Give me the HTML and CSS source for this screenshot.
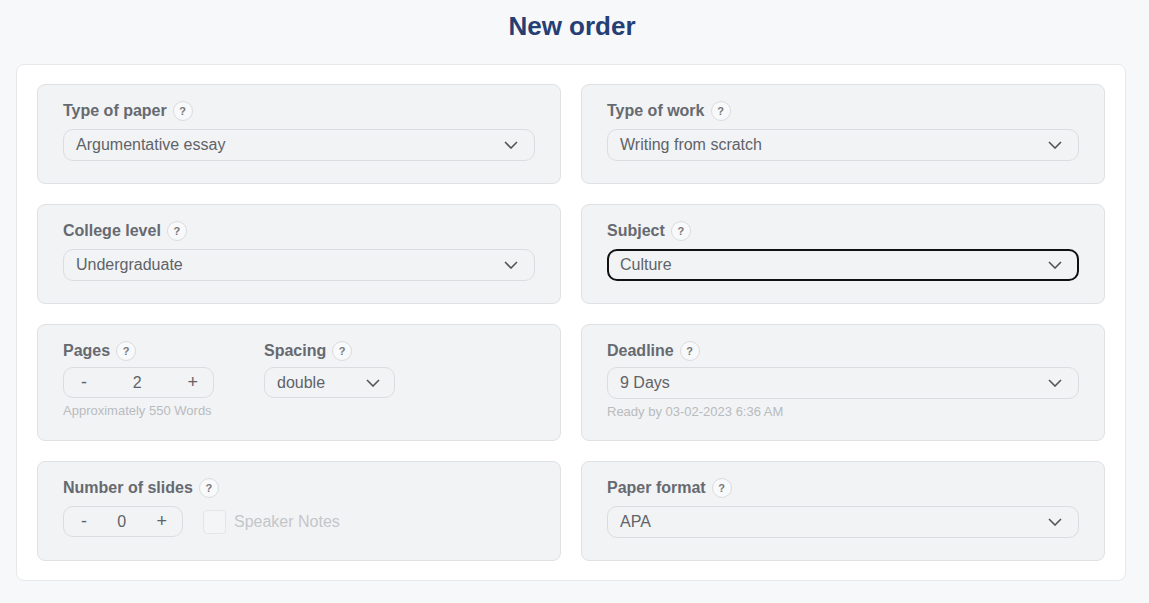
FILE: index.html
```html
<!DOCTYPE html>
<html lang="en">
<head>
    <meta charset="UTF-8">
    <meta name="viewport" content="width=device-width, initial-scale=1.0">
    <title>New order</title>
    <link rel="stylesheet" href="styles.css">
</head>
<body>

    <h1 class="title">New order</h1>

    <div class="order-box">

        <div class="field-card">
            <div class="label">Type of paper <span class="help">?</span></div>
            <div class="select">
                <span>Argumentative essay</span>
                <svg class="chevron" viewBox="0 0 14 8"><path d="M1 1l6 6 6-6"/></svg>
            </div>
        </div>

        <div class="field-card">
            <div class="label">Type of work <span class="help">?</span></div>
            <div class="select">
                <span>Writing from scratch</span>
                <svg class="chevron" viewBox="0 0 14 8"><path d="M1 1l6 6 6-6"/></svg>
            </div>
        </div>

        <div class="field-card">
            <div class="label">College level <span class="help">?</span></div>
            <div class="select">
                <span>Undergraduate</span>
                <svg class="chevron" viewBox="0 0 14 8"><path d="M1 1l6 6 6-6"/></svg>
            </div>
        </div>

        <div class="field-card">
            <div class="label">Subject <span class="help">?</span></div>
            <div class="select focused">
                <span>Culture</span>
                <svg class="chevron" viewBox="0 0 14 8"><path d="M1 1l6 6 6-6"/></svg>
            </div>
        </div>

        <div class="field-card tall">
            <div class="split">
                <div>
                    <div class="label">Pages <span class="help">?</span></div>
                    <div class="stepper pages">
                        <span class="step">-</span>
                        <span class="value">2</span>
                        <span class="step">+</span>
                    </div>
                    <div class="hint">Approximately 550 Words</div>
                </div>
                <div>
                    <div class="label">Spacing <span class="help">?</span></div>
                    <div class="select small">
                        <span>double</span>
                        <svg class="chevron" viewBox="0 0 14 8"><path d="M1 1l6 6 6-6"/></svg>
                    </div>
                </div>
            </div>
        </div>

        <div class="field-card tall">
            <div class="label">Deadline <span class="help">?</span></div>
            <div class="select">
                <span>9 Days</span>
                <svg class="chevron" viewBox="0 0 14 8"><path d="M1 1l6 6 6-6"/></svg>
            </div>
            <div class="hint">Ready by 03-02-2023 6:36 AM</div>
        </div>

        <div class="field-card">
            <div class="label">Number of slides <span class="help">?</span></div>
            <div class="slides-row">
                <div class="stepper slides">
                    <span class="step">-</span>
                    <span class="value">0</span>
                    <span class="step">+</span>
                </div>
                <label class="check">
                    <span class="box"></span>
                    Speaker Notes
                </label>
            </div>
        </div>

        <div class="field-card">
            <div class="label">Paper format <span class="help">?</span></div>
            <div class="select">
                <span>APA</span>
                <svg class="chevron" viewBox="0 0 14 8"><path d="M1 1l6 6 6-6"/></svg>
            </div>
        </div>

    </div>

</body>
</html>
```

FILE: styles.css
```css
body {
    margin: 0;
    font-family: "Liberation Sans", Arial, sans-serif;
    background-color: #f7f8fa;
    color: #555;
}

.title {
    margin: 0;
    padding-top: 11px;
    height: 53px;
    box-sizing: border-box;
    text-align: center;
    font-size: 26px;
    line-height: 30px;
    color: #253f74;
    text-indent: -5px;
}

.order-box {
    margin: 11px 23px 0 16px;
    background-color: white;
    border: 1px solid #e6e8eb;
    border-radius: 8px;
    padding: 19px 20px 19px 20px;
    display: grid;
    grid-template-columns: 1fr 1fr;
    gap: 20px;
}

.field-card {
    background-color: #f2f3f5;
    border: 1px solid #dfe1e4;
    border-radius: 8px;
    padding: 16px 25px 22px 25px;
    height: 100px;
    box-sizing: border-box;
}

.field-card.tall {
    height: 117px;
}

.label {
    display: flex;
    align-items: center;
    gap: 6px;
    height: 20px;
    font-size: 16px;
    font-weight: bold;
    color: #666a70;
    margin-bottom: 8px;
}

.tall .label {
    margin-bottom: 6px;
}

.help {
    width: 18px;
    height: 18px;
    border: 1px solid #d9dbde;
    border-radius: 50%;
    background-color: #f8f9fa;
    font-size: 11px;
    font-weight: bold;
    color: #777;
    display: flex;
    align-items: center;
    justify-content: center;
}

.select {
    height: 32px;
    box-sizing: border-box;
    border: 1px solid #dadcdf;
    border-radius: 10px;
    padding: 0 16px 0 12px;
    display: flex;
    align-items: center;
    justify-content: space-between;
    font-size: 16px;
    color: #5f6368;
}

.select.focused {
    border: 2px solid #111;
    padding: 0 15px 0 11px;
}

.select.small {
    width: 131px;
    height: 31px;
    margin-top: 1px;
    padding-right: 14px;
}

.chevron {
    width: 14px;
    height: 8px;
    fill: none;
    stroke: #555;
    stroke-width: 1.6;
}

.split {
    display: flex;
    gap: 50px;
}

.stepper {
    height: 31px;
    box-sizing: border-box;
    border: 1px solid #dadcdf;
    border-radius: 10px;
    display: flex;
    align-items: center;
    justify-content: space-between;
    padding: 0 15px 0 17px;
    font-size: 16px;
    color: #5f6368;
}

.stepper.pages {
    width: 151px;
    margin-top: 1px;
}

.stepper.slides {
    width: 120px;
}

.step {
    font-size: 18px;
}

.hint {
    margin-top: 5px;
    font-size: 13px;
    color: #b8bbbf;
}

.slides-row {
    display: flex;
    align-items: center;
    gap: 20px;
}

.check {
    display: flex;
    align-items: center;
    gap: 8px;
    font-size: 16px;
    color: #c4c6c9;
}

.box {
    width: 21px;
    height: 22px;
    border: 1px solid #e3e5e7;
    border-radius: 4px;
    background-color: #f4f5f7;
}
```
